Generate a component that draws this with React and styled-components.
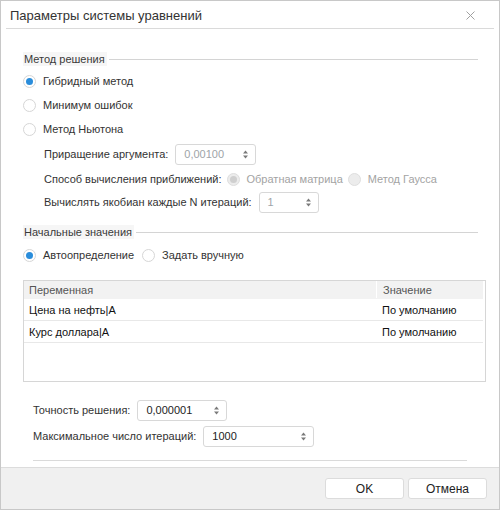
import React from "react";
import styled, { createGlobalStyle, css } from "styled-components";

const Global = createGlobalStyle`
  html, body { margin: 0; padding: 0; background: #fff; }
  body { font-family: "Liberation Sans", Arial, sans-serif; font-size: 11px; color: #333; }
`;

const Dialog = styled.div`
  box-sizing: border-box;
  width: 500px;
  height: 510px;
  border: 1px solid #c8c8c8;
  display: flex;
  flex-direction: column;
  background: #fff;
`;

const TitleBar = styled.div`
  box-sizing: border-box;
  height: 27px;
  display: flex;
  align-items: center;
  justify-content: space-between;
  padding: 1px 24px 0 9px;
`;

const Title = styled.div`
  font-size: 13px;
  color: #333;
`;

const Close = styled.svg`
  width: 9px;
  height: 9px;
`;

const Rule = styled.div`
  height: 1px;
  background: #dadada;
  margin: ${(p) => p.$margin || "0"};
`;

const Body = styled.div`
  flex: 1;
  display: flex;
  flex-direction: column;
  padding: 23px 13px 0 22px;
`;

const Legend = styled.div`
  display: flex;
  align-items: center;
  height: 14px;
  margin-top: ${(p) => p.$top || 0}px;
  margin-right: 8px;
`;

const LegendText = styled.span`
  background: #f6f6f6;
  padding: 0 2px 0 1px;
  color: #3a3a3a;
  line-height: 14px;
  white-space: nowrap;
`;

const LegendLine = styled.div`
  flex: 1;
  height: 1px;
  background: #d4d4d4;
  margin-left: 2px;
`;

const Row = styled.div`
  display: flex;
  align-items: center;
  height: 24px;
  padding-left: ${(p) => p.$indent || 0}px;
  margin-top: ${(p) => p.$top || 0}px;
  gap: ${(p) => p.$gap ?? 8}px;
`;

const RadioWrap = styled.label`
  display: flex;
  align-items: center;
  gap: 7px;
  color: ${(p) => (p.$disabled ? "#a3a3a3" : "#333")};
  white-space: nowrap;
`;

const Circle = styled.span`
  box-sizing: border-box;
  width: 13px;
  height: 13px;
  border-radius: 50%;
  border: 1px solid #d6d6d6;
  background: #fff;
  display: flex;
  align-items: center;
  justify-content: center;
  flex: none;
  ${(p) =>
    p.$disabled &&
    css`
      background: #ececec;
      border-color: #dedede;
    `}
  &::after {
    content: "";
    width: 7px;
    height: 7px;
    border-radius: 50%;
    background: ${(p) => (p.$disabled ? "#cfcfcf" : "#2a8ddb")};
    display: ${(p) => (p.$checked ? "block" : "none")};
  }
`;

const Label = styled.span`
  color: #333;
  white-space: nowrap;
`;

const Spin = styled.div`
  box-sizing: border-box;
  width: ${(p) => p.$w}px;
  height: 21px;
  border: 1px solid #d8d8d8;
  border-radius: 3px;
  display: flex;
  align-items: center;
  justify-content: space-between;
  padding: 0 6px 0 8px;
  color: ${(p) => (p.$muted ? "#9ea4a8" : "#222")};
  background: #fff;
  flex: none;
`;

const Arrows = styled.svg`
  width: 7px;
  height: 11px;
`;

const Table = styled.div`
  box-sizing: border-box;
  margin-top: 13px;
  width: 463px;
  height: 102px;
  border: 1px solid #d6d6d6;
  display: flex;
  flex-direction: column;
`;

const TRow = styled.div`
  display: grid;
  grid-template-columns: 352px 107px;
  height: ${(p) => (p.$head ? 17 : 21)}px;
  border-bottom: 1px solid ${(p) => (p.$head ? "transparent" : "#e8e8e8")};
  background: ${(p) => (p.$head ? "#f2f2f2" : "#fff")};
  margin-right: 2px;
`;

const Cell = styled.div`
  display: flex;
  align-items: center;
  padding-left: ${(p) => (p.$second ? 6 : 5)}px;
  color: ${(p) => (p.$head ? "#555" : "#111")};
  border-left: ${(p) => (p.$second && p.$head ? "1px solid #fff" : "none")};
  white-space: nowrap;
`;

const Lower = styled.div`
  display: flex;
  flex-direction: column;
  padding-left: 10px;
  margin-top: 16px;
`;

const Footer = styled.div`
  box-sizing: border-box;
  height: 42px;
  border-top: 1px solid #dcdcdc;
  background: #f0f0f0;
  display: flex;
  justify-content: flex-end;
  align-items: flex-start;
  padding: 10px 12px 0 0;
  gap: 4px;
`;

const Button = styled.button`
  box-sizing: border-box;
  width: 79px;
  height: 21px;
  border: 1px solid #dcdcdc;
  border-radius: 3px;
  background: #fff;
  font-family: "Liberation Sans", Arial, sans-serif;
  font-size: 12px;
  color: #222;
  padding: 0;
`;

const Radio = ({ checked, disabled, children }) => (
  <RadioWrap $disabled={disabled}>
    <Circle $checked={checked} $disabled={disabled} />
    {children}
  </RadioWrap>
);

const SpinBox = ({ w, value, muted }) => (
  <Spin $w={w} $muted={muted}>
    <span>{value}</span>
    <Arrows viewBox="0 0 7 11">
      <path d="M3.5 1.5 L6 4.5 L1 4.5 Z" fill="#7a7a7a" />
      <path d="M3.5 9.5 L6 6.5 L1 6.5 Z" fill="#7a7a7a" />
    </Arrows>
  </Spin>
);

const variables = [
  { name: "Цена на нефть|A", value: "По умолчанию" },
  { name: "Курс доллара|A", value: "По умолчанию" },
];

export default function App() {
  return (
    <>
      <Global />
      <Dialog>
        <TitleBar>
          <Title>Параметры системы уравнений</Title>
          <Close viewBox="0 0 9 9">
            <path d="M0.5 0.5 L8.5 8.5 M8.5 0.5 L0.5 8.5" stroke="#a0a0a0" strokeWidth="1" />
          </Close>
        </TitleBar>
        <Rule $margin="0 5px" />
        <Body>
          <Legend>
            <LegendText>Метод решения</LegendText>
            <LegendLine />
          </Legend>
          <Row $top={3}>
            <Radio checked>Гибридный метод</Radio>
          </Row>
          <Row>
            <Radio>Минимум ошибок</Radio>
          </Row>
          <Row>
            <Radio>Метод Ньютона</Radio>
          </Row>
          <Row $indent={21} $top={1} $gap={7}>
            <Label>Приращение аргумента:</Label>
            <SpinBox w={81} value="0,00100" muted />
          </Row>
          <Row $indent={21} $gap={5} $top={1}>
            <Label>Способ вычисления приближений:</Label>
            <Radio checked disabled>Обратная матрица</Radio>
            <Radio disabled>Метод Гаусса</Radio>
          </Row>
          <Row $indent={21} $top={-1} $gap={7}>
            <Label>Вычислять якобиан каждые N итераций:</Label>
            <SpinBox w={60} value="1" muted />
          </Row>
          <Legend $top={11}>
            <LegendText>Начальные значения</LegendText>
            <LegendLine />
          </Legend>
          <Row $top={4} $gap={8}>
            <Radio checked>Автоопределение</Radio>
            <Radio>Задать вручную</Radio>
          </Row>
          <Table>
            <TRow $head>
              <Cell $head>Переменная</Cell>
              <Cell $head $second>Значение</Cell>
            </TRow>
            {variables.map((v) => (
              <TRow key={v.name}>
                <Cell>{v.name}</Cell>
                <Cell $second>{v.value}</Cell>
              </TRow>
            ))}
          </Table>
          <Lower>
            <Row $gap={7}>
              <Label>Точность решения:</Label>
              <SpinBox w={90} value="0,000001" />
            </Row>
            <Row $top={2} $gap={7}>
              <Label>Максимальное число итераций:</Label>
              <SpinBox w={111} value="1000" />
            </Row>
            <Rule $margin="12px 19px 0 0" />
          </Lower>
        </Body>
        <Footer>
          <Button>OK</Button>
          <Button>Отмена</Button>
        </Footer>
      </Dialog>
    </>
  );
}
